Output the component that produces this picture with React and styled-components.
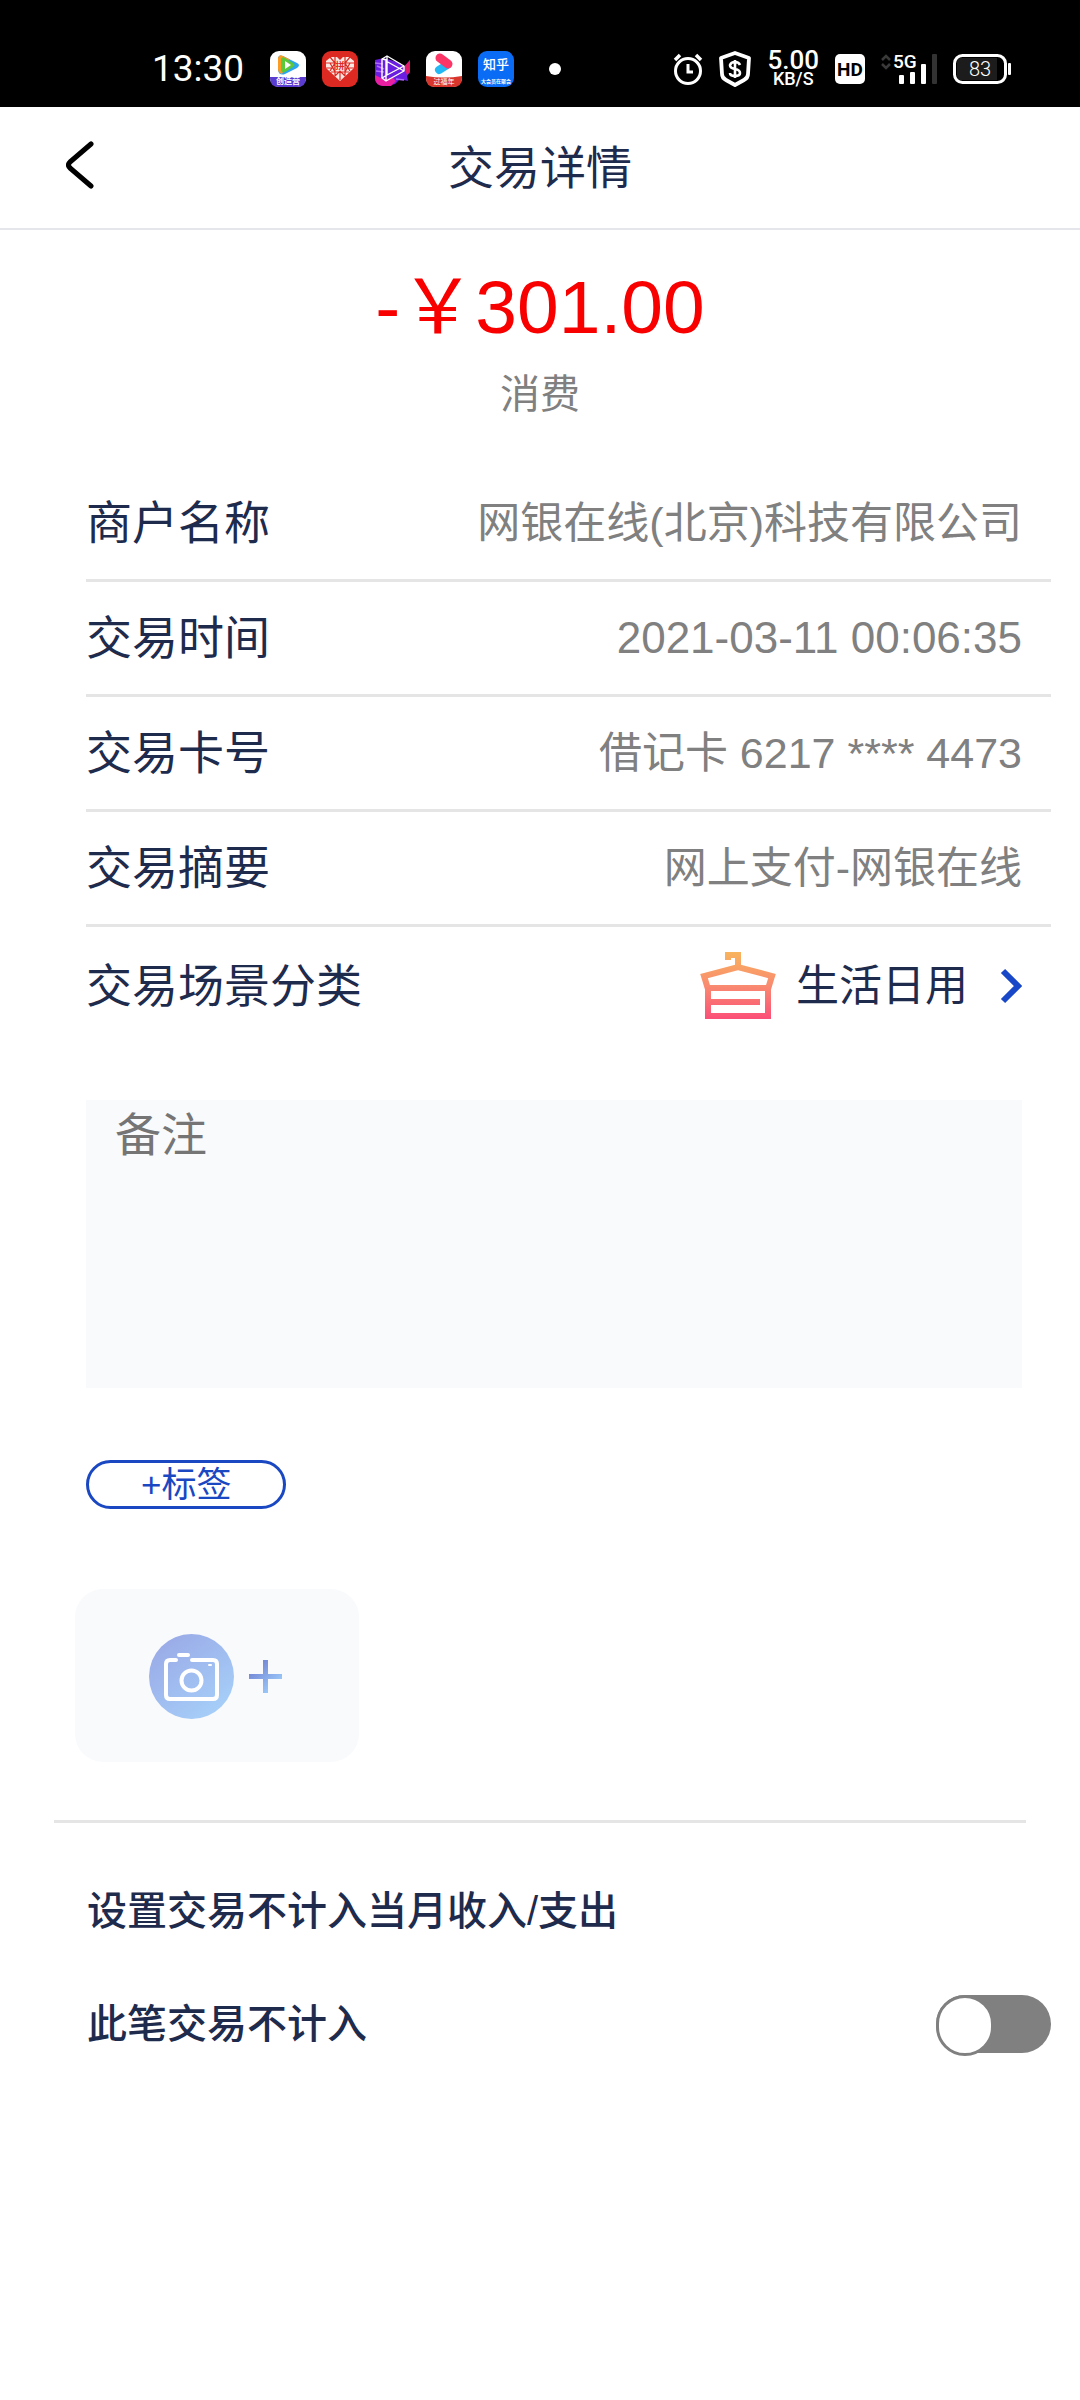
import React, { useState } from "react";
import styled, { createGlobalStyle } from "styled-components";

const ink = "#1e2b4d";
const muted = "#808080";
const rule = "#e5e5e5";
const brand = "#1a47c2";
const panel = "#f9fafc";

const GlobalStyle = createGlobalStyle`
  *, *::before, *::after { box-sizing: border-box; }
  body {
    margin: 0;
    background: #fff;
    color: ${ink};
    font-family: "Liberation Sans", "Noto Sans CJK SC", sans-serif;
  }
  button, input, textarea { font-family: inherit; color: inherit; }
  button { border: 0; padding: 0; background: none; cursor: pointer; }
`;

const StatusBar = styled.div`
  display: flex;
  justify-content: space-between;
  align-items: center;
  height: 107px;
  padding: 30px 69px 0 152px;
  background: #000;
  color: #fff;
  font-family: Roboto, sans-serif;
`;

const StatusGroup = styled.div`
  display: flex;
  align-items: center;
  gap: 16px;
`;

const Clock = styled.time`
  margin-right: 10px;
  font-size: 37px;
  line-height: 40px;
`;

const Dot = styled.span`
  width: 12px;
  height: 12px;
  margin-left: 19px;
  border-radius: 50%;
  background: #fff;
`;

const Speed = styled.div`
  display: flex;
  flex-direction: column;
  align-items: center;
  font-weight: 500;
  font-size: 26px;
  line-height: 20px;
`;

const SpeedUnit = styled.span`
  font-size: 18px;
  line-height: 18px;
`;

const Header = styled.header`
  display: grid;
  grid-template-columns: 120px 1fr 120px;
  align-items: center;
  height: 123px;
  border-bottom: 2px solid #e5e5ec;
`;

const BackButton = styled.button`
  display: flex;
  justify-content: flex-end;
  width: 95px;
  padding-bottom: 6px;
`;

const Title = styled.h1`
  margin: 0;
  text-align: center;
  font-size: 46px;
  font-weight: 400;
  line-height: 60px;
`;

const Summary = styled.section`
  padding: 32px 0 43px;
  text-align: center;
`;

const Amount = styled.p`
  margin: 0;
  color: #f80000;
  font-size: 75px;
  line-height: 90px;
`;

const Kind = styled.p`
  margin: 12px 0 0;
  color: ${muted};
  font-size: 40px;
  line-height: 60px;
`;

const Details = styled.dl`
  margin: 0 29px 0 86px;
`;

const DetailRow = styled.div`
  display: flex;
  justify-content: space-between;
  align-items: center;
  height: 115px;
  padding-right: 29px;
  border-bottom: 3px solid ${rule};

  &:last-child {
    height: 117px;
    border-bottom: 0;
  }
`;

const DetailLabel = styled.dt`
  font-size: 46px;
  line-height: 60px;
`;

const DetailValue = styled.dd`
  margin: 0;
  color: ${muted};
  font-size: ${(p) => (p.$numeric ? 44 : 43)}px;
  line-height: 60px;
`;

const CategoryButton = styled.button`
  display: flex;
  align-items: center;
  color: ${ink};
  font-size: 43px;
  line-height: 60px;
`;

const CategoryName = styled.span`
  margin: 0 32px 0 20px;
`;

const Note = styled.textarea`
  display: block;
  width: calc(100% - 144px);
  height: 288px;
  margin: 56px 58px 0 86px;
  padding: 0 29px;
  border: 0;
  resize: none;
  background: ${panel};
  font-size: 46px;
  line-height: 70px;

  &::placeholder { color: #757575; opacity: 1; }
`;

const TagButton = styled.button`
  display: block;
  height: 49px;
  margin: 72px 0 0 86px;
  padding: 0 52px;
  border: 3px solid ${brand};
  border-radius: 25px;
  color: ${brand};
  font-size: 35px;
  line-height: 43px;
`;

const PhotoButton = styled.button`
  display: flex;
  justify-content: center;
  align-items: center;
  gap: 15px;
  width: 284px;
  height: 173px;
  margin: 80px 0 0 75px;
  padding: 2px 4px 0 0;
  border-radius: 28px;
  background: ${panel};
`;

const Divider = styled.hr`
  height: 3px;
  margin: 58px 54px 0;
  border: 0;
  background: ${rule};
`;

const Settings = styled.section`
  padding: 58px 29px 58px 87px;
  font-size: 40px;
  line-height: 60px;
`;

const SettingsTitle = styled.h2`
  margin: 0 0 53px;
  font-size: 40px;
  font-weight: 500;
`;

const SettingRow = styled.div`
  display: flex;
  justify-content: space-between;
  align-items: center;
  font-weight: 500;
`;

const Switch = styled.input`
  appearance: none;
  width: 115px;
  height: 58px;
  margin: 0;
  border-radius: 29px;
  background: ${(p) => (p.checked ? brand : muted)};
  cursor: pointer;

  &::before {
    content: "";
    display: block;
    width: 58px;
    height: 61px;
    margin-left: ${(p) => (p.checked ? 57 : 0)}px;
    border: 3px solid ${(p) => (p.checked ? brand : muted)};
    border-radius: 30px;
    background: #fff;
  }
`;

const cjk = '"Noto Sans CJK SC", sans-serif';

const TencentIcon = () => (
  <svg width="36" height="36" viewBox="0 0 36 36" aria-hidden="true">
    <rect width="36" height="36" rx="9" fill="#fff" />
    <path d="M8 8q0-5 5-3l14 7q4 2 0 5l-12 6q-6 2-7-4z" fill="#2aa5f0" />
    <path d="M8 7q1-4 5-2l6 3-7 15q-4-1-4-5z" fill="#fb9a25" />
    <path d="M11 8q1-3 4-1l8 5q3 2 0 4l-8 5q-4 1-4-3z" fill="#5cc83b" />
    <path d="M15 10l6 4-6 4z" fill="#fff" />
    <path d="M0 26h36v1q0 9-9 9H9q-9 0-9-9z" fill="#5b3cd0" />
    <text x="18" y="33" textAnchor="middle" fontSize="8" fontWeight="700" fill="#fff" fontFamily={cjk}>创造营</text>
  </svg>
);

const PddIcon = () => (
  <svg width="36" height="36" viewBox="0 0 36 36" aria-hidden="true">
    <rect width="36" height="36" rx="9" fill="#dc2a22" />
    <path d="M18 30L4 17V10l5-4h6l3 3 3-3h6l5 4v7z" fill="#fbe9e6" />
    <g stroke="#dc2a22" strokeWidth="1.2" fill="none">
      <path d="M4 12h10M22 12h10M4 17h9M23 17h9M8 6l5 6-5 8M28 6l-5 6 5 8M13 6v19M23 6v19M9 21h18M13 25l5-5 5 5M8 12l5 9M28 12l-5 9M18 21v8" />
    </g>
    <text x="18" y="18" textAnchor="middle" fontSize="9" fontWeight="700" fill="#dc2a22" fontFamily={cjk}>拼</text>
  </svg>
);

const PrismIcon = () => (
  <svg width="36" height="36" viewBox="0 0 36 36" aria-hidden="true">
    <path d="M1 9l9-2 16 5 4 4 6-7v12l-3 4 1 5-8-2-5 5-9 2H9q-8-1-8-9z" fill="#6a1fe0" />
    <path d="M30 16l6-7v12l-3 3z" fill="#e0186a" />
    <path d="M1 24l8 4 10-1 3 3-5 5H9q-8-1-8-8z" fill="#e81fa0" />
    <path d="M3 15l7 3M2 20l8 1M22 28l8 1M1 12l8 1" stroke="#b06cff" strokeWidth="1.5" />
    <g fill="none" stroke="#fff" strokeWidth="1.4" strokeLinejoin="round">
      <path d="M13 5l17 10v5L12 30l-4-3V8z" />
      <path d="M13 5v19l17-9M8 27l5-3M12 30V10l18 10M8 8l5 1" />
    </g>
  </svg>
);

const YoukuIcon = () => (
  <svg width="36" height="36" viewBox="0 0 36 36" aria-hidden="true">
    <rect width="36" height="36" rx="9" fill="#fff" />
    <path d="M13 19l8-5" stroke="#22b8f5" strokeWidth="8" strokeLinecap="round" />
    <path d="M14 7l8 6" stroke="#fb3565" strokeWidth="9" strokeLinecap="round" />
    <path d="M0 25q18 3 36 0v2q0 9-9 9H9q-9 0-9-9z" fill="#d8352c" />
    <text x="18" y="33" textAnchor="middle" fontSize="7" fill="#fff" fontFamily={cjk}>过福年</text>
  </svg>
);

const ZhihuIcon = () => (
  <svg width="36" height="36" viewBox="0 0 36 36" aria-hidden="true">
    <rect width="36" height="36" rx="9" fill="#0a6cf5" />
    <text x="18" y="18" textAnchor="middle" fontSize="13" fontWeight="500" fill="#fff" fontFamily={cjk}>知乎</text>
    <text x="18" y="32" textAnchor="middle" fontSize="5" fontWeight="700" fill="#fff" fontFamily={cjk}>大会员在聚会</text>
  </svg>
);

const AlarmIcon = () => (
  <svg width="30" height="32" viewBox="0 0 30 32" fill="none" stroke="#fff" aria-hidden="true">
    <circle cx="15" cy="18" r="12.5" strokeWidth="3" />
    <path d="M15 11v8h5" strokeWidth="3" />
    <path d="M2 7l5-5M28 7l-5-5" strokeWidth="3.5" />
  </svg>
);

const ShieldIcon = () => (
  <svg width="32" height="36" viewBox="0 0 32 36" fill="none" stroke="#fff" aria-hidden="true">
    <path d="M16 2l14 5-1 16q0 4-4 6l-9 5-9-5q-4-2-4-6L2 7z" strokeWidth="3.8" strokeLinejoin="round" />
    <path d="M21 14q-1-3-5-3t-5 3.200q0 2.800 5 3.800t5 4q0 3-5 3t-5-3M16 9v18" strokeWidth="2.600" />
  </svg>
);

const HdIcon = () => (
  <svg width="30" height="30" viewBox="0 0 30 30" aria-hidden="true">
    <rect width="30" height="30" rx="5" fill="#fff" />
    <text x="15" y="22" textAnchor="middle" fontSize="19" fontWeight="700" fontFamily="Roboto, sans-serif">HD</text>
  </svg>
);

const SignalIcon = () => (
  <svg width="56" height="40" viewBox="0 -4 56 40" aria-hidden="true">
    <path d="M1 7l4-4 4 4M1 11l4 4 4-4" fill="none" stroke="#3a3a3a" strokeWidth="2.500" />
    <text x="12" y="15" fontSize="19" fontWeight="500" fill="#fff" fontFamily="Roboto, sans-serif">5G</text>
    <g fill="#fff">
      <rect x="18" y="22" width="5" height="9" rx="1" />
      <rect x="29" y="19" width="5" height="12" rx="1" />
      <rect x="40" y="11" width="5" height="20" rx="1" />
    </g>
    <rect x="51" y="1" width="5" height="30" rx="1" fill="#333" />
  </svg>
);

const BatteryIcon = () => (
  <svg width="58" height="30" viewBox="0 0 58 30" aria-hidden="true">
    <rect x="1.500" y="1.500" width="51" height="27" rx="8" fill="#000" stroke="#fff" strokeWidth="3" />
    <path d="M8 4h36v22H8q-4 0-4-5V9q0-5 4-5z" fill="#1c1c1c" />
    <rect x="55" y="9" width="3" height="12" rx="1" fill="#fff" />
    <text x="27" y="22" textAnchor="middle" fontSize="20" fontWeight="300" fill="#fff" fontFamily="Roboto, sans-serif">83</text>
  </svg>
);

const BackIcon = () => (
  <svg width="29" height="48" viewBox="0 0 29 48" fill="none" aria-hidden="true">
    <path d="M25 3L4 21q-3 3 0 6l21 18" stroke="#000" strokeWidth="5" strokeLinecap="round" strokeLinejoin="round" />
  </svg>
);

const HangerIcon = () => (
  <svg width="76" height="70" viewBox="0 0 76 70" fill="none" aria-hidden="true">
    <linearGradient id="warm" gradientUnits="userSpaceOnUse" x1="0" y1="0" x2="0" y2="70">
      <stop offset="0" stopColor="#f8b55c" />
      <stop offset="0.500" stopColor="#f98a70" />
      <stop offset="1" stopColor="#fb4b78" />
    </linearGradient>
    <g stroke="url(#warm)" strokeWidth="6">
      <path d="M28 9V4h10v14" />
      <path d="M8 38L4 25l34-9 34 9-4 13" />
      <path d="M8 37h60v28H8z" />
      <path d="M8 51h52" />
    </g>
  </svg>
);

const ChevronIcon = () => (
  <svg width="22" height="36" viewBox="0 0 22 36" fill="none" aria-hidden="true">
    <path d="M3 3l15 15L3 33" stroke="#1848c8" strokeWidth="6" />
  </svg>
);

const CameraIcon = () => (
  <svg width="85" height="85" viewBox="0 0 85 85" fill="none" aria-hidden="true">
    <linearGradient id="sky" x1="0.150" y1="0.100" x2="0.800" y2="0.950">
      <stop offset="0" stopColor="#9aabe7" />
      <stop offset="1" stopColor="#a6cff9" />
    </linearGradient>
    <circle cx="42.500" cy="42.500" r="42.500" fill="url(#sky)" />
    <g stroke="#fff" strokeWidth="4" strokeLinecap="round">
      <path d="M27 26h-6q-4 0-4 4v31q0 4 4 4h43q4 0 4-4V30q0-4-4-4H43" />
      <path d="M30 21h9" />
      <path d="M60 31h2" strokeWidth="2" />
      <circle cx="42.500" cy="46.500" r="10" />
    </g>
  </svg>
);

const PlusIcon = () => (
  <svg width="33" height="33" viewBox="0 0 33 33" aria-hidden="true">
    <linearGradient id="plus" gradientUnits="userSpaceOnUse" x1="4" y1="4" x2="26" y2="28">
      <stop offset="0" stopColor="#6f7fd0" />
      <stop offset="1" stopColor="#9ccbfb" />
    </linearGradient>
    <path d="M14 0h5v14h14v5H19v14h-5V19H0v-5h14z" fill="url(#plus)" />
  </svg>
);

const details = [
  { label: "商户名称", value: "网银在线(北京)科技有限公司" },
  { label: "交易时间", value: "2021-03-11 00:06:35", numeric: true },
  { label: "交易卡号", value: "借记卡 6217 **** 4473" },
  { label: "交易摘要", value: "网上支付-网银在线" },
];

export default function App() {
  const [excluded, setExcluded] = useState(false);
  const [note, setNote] = useState("");

  return (
    <>
      <GlobalStyle />
      <StatusBar>
        <StatusGroup>
          <Clock>13:30</Clock>
          <TencentIcon />
          <PddIcon />
          <PrismIcon />
          <YoukuIcon />
          <ZhihuIcon />
          <Dot />
        </StatusGroup>
        <StatusGroup>
          <AlarmIcon />
          <ShieldIcon />
          <Speed>
            5.00
            <SpeedUnit>KB/S</SpeedUnit>
          </Speed>
          <HdIcon />
          <SignalIcon />
          <BatteryIcon />
        </StatusGroup>
      </StatusBar>

      <Header>
        <BackButton type="button" aria-label="返回">
          <BackIcon />
        </BackButton>
        <Title>交易详情</Title>
      </Header>

      <main>
        <Summary>
          <Amount>-￥301.00</Amount>
          <Kind>消费</Kind>
        </Summary>

        <Details>
          {details.map(({ label, value, numeric }) => (
            <DetailRow key={label}>
              <DetailLabel>{label}</DetailLabel>
              <DetailValue $numeric={numeric}>{value}</DetailValue>
            </DetailRow>
          ))}
          <DetailRow>
            <DetailLabel>交易场景分类</DetailLabel>
            <DetailValue>
              <CategoryButton type="button">
                <HangerIcon />
                <CategoryName>生活日用</CategoryName>
                <ChevronIcon />
              </CategoryButton>
            </DetailValue>
          </DetailRow>
        </Details>

        <Note
          aria-label="备注"
          placeholder="备注"
          value={note}
          onChange={(e) => setNote(e.target.value)}
        />

        <TagButton type="button">+标签</TagButton>

        <PhotoButton type="button" aria-label="添加照片">
          <CameraIcon />
          <PlusIcon />
        </PhotoButton>

        <Divider />

        <Settings>
          <SettingsTitle>设置交易不计入当月收入/支出</SettingsTitle>
          <SettingRow>
            <label htmlFor="exclude">此笔交易不计入</label>
            <Switch
              id="exclude"
              type="checkbox"
              role="switch"
              checked={excluded}
              onChange={(e) => setExcluded(e.target.checked)}
            />
          </SettingRow>
        </Settings>
      </main>
    </>
  );
}
